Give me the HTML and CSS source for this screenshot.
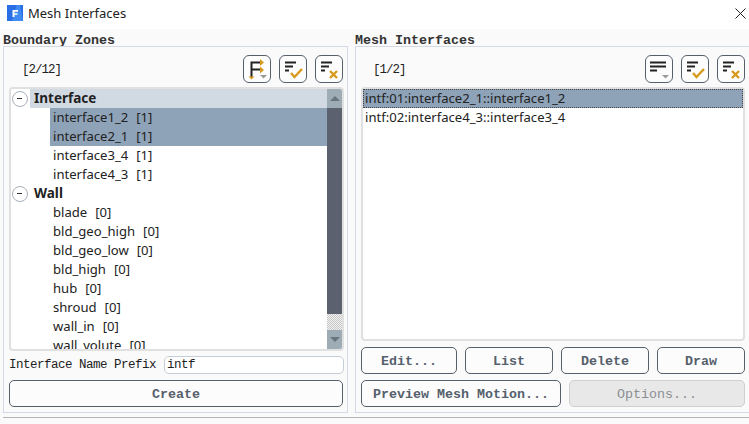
FILE: index.html
```html
<!DOCTYPE html>
<html lang="en">
<head>
<meta charset="utf-8">
<title>Mesh Interfaces</title>
<link rel="stylesheet" href="styles.css">
</head>
<body>
<header class="titlebar">
  <svg class="app-icon" width="16" height="16" viewBox="0 0 16 16"><rect width="16" height="16" fill="#2a6fe6"/><path d="M5 16L9.500 0H13l3 16z" fill="#3f8bf2"/><path d="M5.500 5h5.500v1.700H7.500v1.500h3v1.600h-3V12h-2z" fill="#fff"/></svg>
  <span class="title">Mesh Interfaces</span>
  <svg class="close" width="11" height="11" viewBox="0 0 11 11"><path d="M.5.5l10 10M10.500.5l-10 10" stroke="#222" fill="none"/></svg>
</header>
<main class="columns">
  <section class="col col-left">
    <h2 class="group-title">Boundary Zones</h2>
    <div class="panel">
      <div class="toolbar">
        <span class="count">[2/12]</span>
        <button class="tool">
          <svg width="26" height="26" viewBox="0 0 26 26"><path d="M7.500 21V6.500H18M7.500 13.500H18" fill="none" stroke="#222" stroke-width="2"/><path d="M4.500 20.500h6l-3 3z" fill="#d89a1c"/><path d="M16 3l4 3.500-4 3.500zM16 10.500l4 3.500-4 3.500z" fill="#d89a1c"/><path d="M16 19h7l-3.500 3.500z" fill="#9a9a9a"/></svg>
        </button>
        <button class="tool">
          <svg width="26" height="26" viewBox="0 0 26 26"><path d="M5 6.500h11M5 10.500h8M5 14.500h4" stroke="#222" stroke-width="2" fill="none"/><path d="M11 17l3.500 4 7.500-8" stroke="#d89a1c" stroke-width="2.400" fill="none"/></svg>
        </button>
        <button class="tool">
          <svg width="26" height="26" viewBox="0 0 26 26"><path d="M5 6.500h11M5 10.500h8M5 14.500h4" stroke="#222" stroke-width="2" fill="none"/><path d="M14 15l7 7M21 15l-7 7" stroke="#d89a1c" stroke-width="2.400" fill="none"/></svg>
        </button>
      </div>
      <div class="listbox tree">
        <div class="tree-body">
          <div class="group-row"><span class="toggle"></span><span class="group-name">Interface</span></div>
          <div class="leaf selected"><span>interface1_2</span><span>[1]</span></div>
          <div class="leaf selected"><span>interface2_1</span><span>[1]</span></div>
          <div class="leaf"><span>interface3_4</span><span>[1]</span></div>
          <div class="leaf"><span>interface4_3</span><span>[1]</span></div>
          <div class="group-row plain"><span class="toggle"></span><span class="group-name">Wall</span></div>
          <div class="leaf"><span>blade</span><span>[0]</span></div>
          <div class="leaf"><span>bld_geo_high</span><span>[0]</span></div>
          <div class="leaf"><span>bld_geo_low</span><span>[0]</span></div>
          <div class="leaf"><span>bld_high</span><span>[0]</span></div>
          <div class="leaf"><span>hub</span><span>[0]</span></div>
          <div class="leaf"><span>shroud</span><span>[0]</span></div>
          <div class="leaf"><span>wall_in</span><span>[0]</span></div>
          <div class="leaf"><span>wall_volute</span><span>[0]</span></div>
        </div>
        <div class="scrollbar">
          <div class="arrow"><span class="tri-up"></span></div>
          <div class="thumb"></div>
          <div class="track"></div>
          <div class="arrow"><span class="tri-down"></span></div>
        </div>
      </div>
      <div class="prefix-row">
        <label class="prefix-label" for="prefix">Interface Name Prefix</label>
        <input class="prefix-input" id="prefix" value="intf">
      </div>
      <div class="btn-row bottom-row"><button class="btn grow create">Create</button></div>
    </div>
  </section>
  <section class="col col-right">
    <h2 class="group-title">Mesh Interfaces</h2>
    <div class="panel">
      <div class="toolbar">
        <span class="count count-right">[1/2]</span>
        <button class="tool">
          <svg width="26" height="26" viewBox="0 0 26 26"><path d="M4 6.500h16M4 10.500h16M4 14.500h7" stroke="#222" stroke-width="2" fill="none"/><path d="M16 19h7l-3.500 3.500z" fill="#9a9a9a"/></svg>
        </button>
        <button class="tool">
          <svg width="26" height="26" viewBox="0 0 26 26"><path d="M5 6.500h11M5 10.500h8M5 14.500h4" stroke="#222" stroke-width="2" fill="none"/><path d="M11 17l3.500 4 7.500-8" stroke="#d89a1c" stroke-width="2.400" fill="none"/></svg>
        </button>
        <button class="tool">
          <svg width="26" height="26" viewBox="0 0 26 26"><path d="M5 6.500h11M5 10.500h8M5 14.500h4" stroke="#222" stroke-width="2" fill="none"/><path d="M14 15l7 7M21 15l-7 7" stroke="#d89a1c" stroke-width="2.400" fill="none"/></svg>
        </button>
      </div>
      <div class="listbox interfaces">
        <div class="iface current">intf:01:interface2_1::interface1_2</div>
        <div class="iface">intf:02:interface4_3::interface3_4</div>
      </div>
      <div class="btn-row">
        <button class="btn edit">Edit...</button>
        <button class="btn grow">List</button>
        <button class="btn grow">Delete</button>
        <button class="btn grow">Draw</button>
      </div>
      <div class="btn-row bottom-row">
        <button class="btn preview">Preview Mesh Motion...</button>
        <button class="btn grow disabled">Options...</button>
      </div>
    </div>
  </section>
</main>
<div class="statusline"></div>
</body>
</html>
```
FILE: styles.css
```css
* { box-sizing: border-box; }
html, body { margin: 0; padding: 0; }
body {
  width: 749px;
  height: 424px;
  overflow: hidden;
  background: #fafafa;
  font-family: "Liberation Mono", monospace;
  color: #222;
}
.titlebar {
  height: 29px;
  background: #fff;
  display: flex;
  align-items: center;
  padding: 0 3px 3px 7px;
}
.app-icon { flex: none; }
.title {
  margin-left: 5px;
  font: 13px "Noto Sans", sans-serif;
  color: #222;
  flex: 1;
}
.close { flex: none; }
.columns {
  display: flex;
  gap: 7px;
  padding: 0 0 0 3px;
  height: 383px;
}
.col { display: flex; flex-direction: column; }
.col-left { width: 345px; }
.col-right { width: 394px; }
.group-title {
  margin: 0;
  height: 17px;
  font: bold 13.33px/23px "Liberation Mono", monospace;
  color: #333;
}
.panel {
  height: 367px;
  border: 1px solid #d4d9e8;
  padding: 8px 4px 5px 5px;
  display: flex;
  flex-direction: column;
}
.col-right .panel { border-right: 0; }
.toolbar {
  height: 28px;
  display: flex;
  align-items: center;
  gap: 8px;
  margin-bottom: 4px;
}
.count {
  flex: 1;
  padding: 2px 0 0 13px;
  font-size: 12.5px;
  letter-spacing: -1px;
}
.count-right { padding-left: 12px; }
.tool {
  width: 28px;
  height: 28px;
  padding: 0;
  background: #fdfdfd;
  border: 1px solid #56606c;
  border-radius: 6px;
  display: flex;
  align-items: center;
  justify-content: center;
}
.listbox {
  background: #fff;
  border: 2px solid #e0e0e0;
  border-radius: 4px;
  font: 13.1px/19px "Noto Sans", sans-serif;
  color: #222;
}
.tree {
  height: 264px;
  margin-right: -1px;
  display: flex;
  overflow: hidden;
}
.tree-body { flex: 1; overflow: hidden; }
.group-row {
  height: 19px;
  display: flex;
  align-items: center;
  background: linear-gradient(to right, #fff 19px, #d1d9e3 19px);
}
.group-row.plain { background: none; }
.toggle {
  width: 16px;
  height: 16px;
  margin-left: 1px;
  border: 1.5px solid #a8afb8;
  border-radius: 50%;
  position: relative;
  flex: none;
}
.toggle::after {
  content: "";
  position: absolute;
  left: 4px;
  top: 6px;
  width: 5px;
  height: 1.500px;
  background: #333;
}
.group-name { margin-left: 6px; font-weight: 700; font-size: 13.5px; }
.leaf {
  height: 19px;
  margin-left: 39px;
  padding-left: 3px;
  display: flex;
  gap: 8px;
}
.leaf.selected { background: #8ea3b8; }
.scrollbar {
  width: 15px;
  display: flex;
  flex-direction: column;
  flex: none;
}
.arrow {
  height: 19px;
  background: #9dacb5;
  display: flex;
  align-items: center;
  justify-content: center;
  flex: none;
}
.tri-up { border: 5px solid transparent; border-top: 0; border-bottom: 5px solid #6a7480; }
.tri-down { border: 5px solid transparent; border-bottom: 0; border-top: 5px solid #6a7480; }
.thumb { flex: 1; background: #5b616e; }
.track {
  height: 16px;
  flex: none;
  background: repeating-conic-gradient(#c8c8c8 0 25%, #f0f0f0 0 50%) 0 0 / 2px 2px;
}
.interfaces { height: 254px; }
.iface { height: 19px; padding-left: 2px; }
.iface.current { background: #8ea3b8; outline: 1px dotted #444; outline-offset: -1px; }
.prefix-row {
  display: flex;
  align-items: center;
  height: 19px;
  margin: 4px 0 6px;
}
.prefix-label {
  width: 155px;
  font-size: 12.5px;
  letter-spacing: -0.5px;
  white-space: nowrap;
  flex: none;
}
.prefix-input {
  width: 180px;
  height: 18px;
  flex: none;
  padding: 0 2px;
  border: 1px solid #c5cdd8;
  border-radius: 5px;
  background: #fff;
  font: 12.5px "Liberation Mono", monospace;
  letter-spacing: -0.5px;
  color: #222;
}
.btn-row {
  display: flex;
  gap: 8px;
  height: 27px;
  margin-top: 6px;
}
.prefix-row + .bottom-row { margin-top: 0; }
.btn {
  height: 27px;
  padding: 2px 0 0;
  background: #fcfcfc;
  border: 1px solid #56606c;
  border-radius: 5px;
  font: bold 13.33px "Liberation Mono", monospace;
  color: #56606c;
}
.grow { flex: 1; }
.edit { width: 96px; }
.preview { width: 200px; }
.disabled {
  background: #e8e8e8;
  border-color: #cfcfcf;
  color: #8a8f94;
  font-weight: 400;
}
.statusline {
  height: 1px;
  margin: 5px 0 0 3px;
  background: #b5b5b5;
}
```
